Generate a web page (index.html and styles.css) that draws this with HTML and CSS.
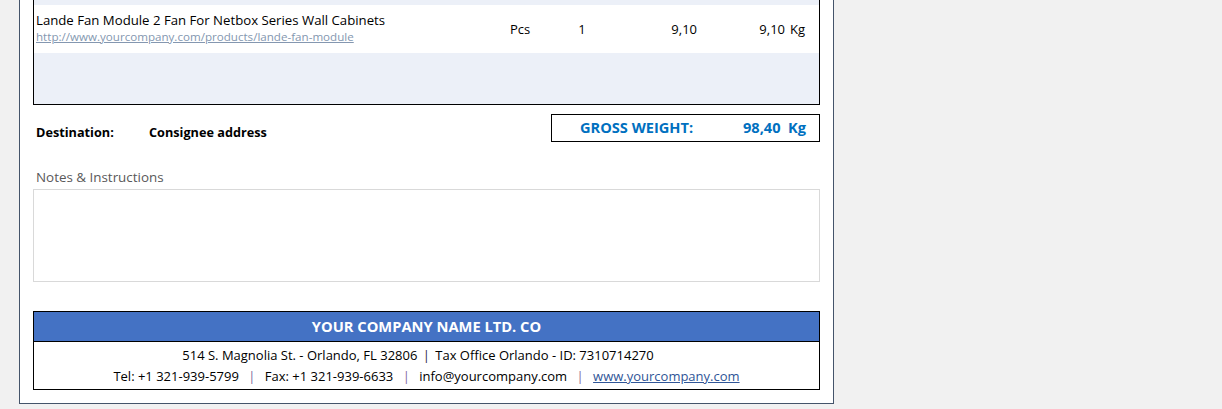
FILE: index.html
```html
<!DOCTYPE html>
<html lang="en">
<head>
<meta charset="utf-8">
<title>Packing list</title>
<link rel="stylesheet" href="styles.css">
</head>
<body>
<div class="sheet">
  <div class="items">
    <div class="band-top"></div>
    <div class="item-row">
      <div class="desc">
        <div class="name">Lande Fan Module 2 Fan For Netbox Series Wall Cabinets</div>
        <a class="plink" href="#">http://www.yourcompany.com/products/lande-fan-module</a>
      </div>
      <div class="unit">Pcs</div>
      <div class="qty">1</div>
      <div class="price">9,10</div>
      <div class="total">9,10</div>
      <div class="kg">Kg</div>
    </div>
    <div class="band-bottom"></div>
  </div>

  <div class="summary">
    <div class="dest">
      <span class="dest-label">Destination:</span>
      <span class="dest-value">Consignee address</span>
    </div>
    <div class="gross">
      <span class="gross-label">GROSS WEIGHT:</span>
      <span class="gross-value">98,40&nbsp; Kg</span>
    </div>
  </div>

  <div class="notes-label">Notes &amp; Instructions</div>
  <div class="notes-box"></div>

  <div class="footer">
    <div class="footer-head">YOUR COMPANY NAME LTD. CO</div>
    <div class="footer-body">
      <div class="fline first">514 S. Magnolia St. - Orlando, FL 32806 <span class="sep dark">|</span> Tax Office Orlando - ID: 7310714270</div>
      <div class="fline">Tel: +1 321-939-5799 <span class="sep">|</span> Fax: +1 321-939-6633 <span class="sep">|</span> info@yourcompany.com <span class="sep">|</span> <a class="flink" href="#">www.yourcompany.com</a></div>
    </div>
  </div>
</div>
</body>
</html>
```

FILE: styles.css
```css
* { box-sizing: border-box; }
html, body {
  margin: 0;
  padding: 0;
  background: #f1f1f1;
}
body {
  font-family: "Open Sans", "Noto Sans", sans-serif;
  color: #000;
}
.sheet {
  margin-left: 19px;
  width: 815px;
  height: 404px;
  background: #fff;
  border: 1px solid #44546a;
  border-top: none;
  padding: 0 13px 13px 13px;
  display: flex;
  flex-direction: column;
}
.items {
  border: 1px solid #000;
  border-top: none;
}
.band-top {
  height: 5px;
  background: #ecf0f8;
}
.band-bottom {
  height: 51px;
  background: #ecf0f8;
}
.item-row {
  height: 48px;
  display: grid;
  grid-template-columns: 456px 60px 64px 86px 86px 1fr;
  align-items: center;
  font-size: 13px;
}
.desc {
  padding-left: 2px;
  display: flex;
  flex-direction: column;
  padding-bottom: 3px;
}
.name { font-size: 13.2px; line-height: 18px; }
.plink {
  font-size: 11.6px;
  line-height: 15px;
  color: #8497b0;
  text-decoration: underline;
}
.unit, .qty { text-align: center; }
.price { text-align: right; padding-right: 3px; }
.total { text-align: right; padding-right: 1px; }
.kg { padding-left: 4px; }

.summary {
  display: flex;
  justify-content: space-between;
  margin-top: 9px;
}
.dest {
  display: flex;
  align-items: center;
  font-weight: bold;
  font-size: 12.7px;
  padding-left: 3px;
  margin-top: 10px;
  height: 16px;
}
.dest-label { width: 113px; }
.gross {
  width: 269px;
  height: 28px;
  border: 1px solid #000;
  display: flex;
  align-items: center;
  color: #0070c0;
  font-weight: bold;
  font-size: 14.6px;
  padding-left: 28px;
  padding-bottom: 2px;
}
.gross-label { width: 163px; }

.notes-label {
  margin-top: 26px;
  padding-left: 3px;
  font-size: 13.4px;
  color: #595959;
  line-height: 18px;
}
.notes-box {
  height: 93px;
  border: 1px solid #d9d9d9;
  margin-top: 3px;
}
.footer {
  margin-top: auto;
  border: 1px solid #000;
}
.footer-head {
  height: 30px;
  background: #4472c4;
  color: #fff;
  font-weight: bold;
  font-size: 14.7px;
  display: flex;
  align-items: center;
  justify-content: center;
  border-bottom: 1px solid #000;
  padding-bottom: 2px;
}
.footer-body {
  padding: 3px 0 2px;
  font-size: 13px;
  text-align: center;
}
.fline { line-height: 21px; }
.fline.first { padding-right: 17px; }
.sep { color: #7f6a9c; padding: 0 6px; }
.sep.dark { color: #2a2140; padding: 0 2px; }
.flink { color: #2f5597; text-decoration: underline; }
```
